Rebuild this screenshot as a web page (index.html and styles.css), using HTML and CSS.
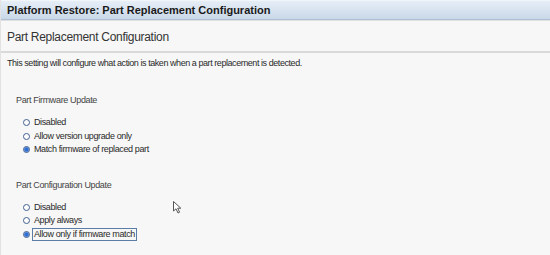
FILE: index.html
```html
<!DOCTYPE html>
<html lang="en">
<head>
    <meta charset="UTF-8">
    <title>Platform Restore: Part Replacement Configuration</title>
    <link rel="stylesheet" href="styles.css">
</head>
<body>
    <div class="page">
        <div class="title-bar">Platform Restore: Part Replacement Configuration</div>
        <div class="section-head">Part Replacement Configuration</div>
        <div class="content">
            <p class="intro">This setting will configure what action is taken when a part replacement is detected.</p>

            <div class="group">
                <div class="group-label">Part Firmware Update</div>
                <ul class="options">
                    <li><span class="radio"></span><span class="label">Disabled</span></li>
                    <li><span class="radio"></span><span class="label">Allow version upgrade only</span></li>
                    <li><span class="radio checked"></span><span class="label">Match firmware of replaced part</span></li>
                </ul>
            </div>

            <div class="group">
                <div class="group-label">Part Configuration Update</div>
                <ul class="options">
                    <li><span class="radio"></span><span class="label">Disabled</span></li>
                    <li><span class="radio"></span><span class="label">Apply always</span></li>
                    <li><span class="radio checked"></span><span class="label focused">Allow only if firmware match</span></li>
                </ul>
            </div>
        </div>

        <!-- mouse pointer -->
        <svg class="cursor" width="10" height="14" viewBox="0 0 10 14">
            <path d="M0.5 0.5 L0.5 10 L3 7.8 L5 12 L6.6 11.2 L4.7 7.2 L7.8 7.2 Z" fill="#fff" stroke="#555" stroke-width="1"/>
        </svg>
    </div>
</body>
</html>
```

FILE: styles.css
```css
body {
    margin: 0;
    font-family: "Liberation Sans", Arial, sans-serif;
    background: #f7f7f7;
    color: #333;
}

.page {
    position: relative;
    width: 550px;
    height: 255px;
    overflow: hidden;
    background: #f7f7f7;
    border-left: 1px solid #e2e2e2;
    box-sizing: border-box;
}

.title-bar {
    height: 18px;
    line-height: 19px;
    padding-left: 6px;
    font-size: 11px;
    font-weight: bold;
    color: #1a1a1a;
    background: linear-gradient(#e6eef7, #c9d8e8);
    border-top: 1px solid #f2f6fb;
    border-bottom: 1px solid #aebfd2;
    box-shadow: 0 1px 0 #e0e0e0;
}

.section-head {
    height: 31px;
    line-height: 35px;
    padding-left: 6px;
    font-size: 12px;
    letter-spacing: -0.3px;
    color: #333;
    border-bottom: 2px solid #d9d9d9;
}

.content {
    padding: 5px 6px;
}

.intro {
    margin: 0 0 27px;
    font-size: 9px;
    letter-spacing: -0.44px;
    color: #2a2a2a;
}

.group {
    padding-left: 9px;
    margin-bottom: 23px;
}

.group-label {
    font-size: 9px;
    letter-spacing: -0.35px;
    color: #444;
    margin-bottom: 11px;
}

.options {
    list-style: none;
    margin: 0;
    padding: 0 0 0 7px;
}

.options li {
    display: flex;
    align-items: center;
    height: 13.5px;
    font-size: 9px;
    letter-spacing: -0.38px;
    color: #2a2a2a;
}

.radio {
    width: 7px;
    height: 7px;
    border: 1px solid #3f5f8f;
    border-radius: 50%;
    background: #fff;
    margin-right: 2px;
    box-sizing: border-box;
    flex: none;
}

.radio.checked {
    background: radial-gradient(circle, #2f6fd8 0, #2f6fd8 1.8px, #b8cdee 2.6px, #fff 3.5px);
}

.label {
    padding: 0 1px;
    border: 1px solid transparent;
    line-height: 11px;
}

.label.focused {
    border-color: #5a7ea8;
}

.cursor {
    position: absolute;
    left: 172px;
    top: 201px;
}
```
